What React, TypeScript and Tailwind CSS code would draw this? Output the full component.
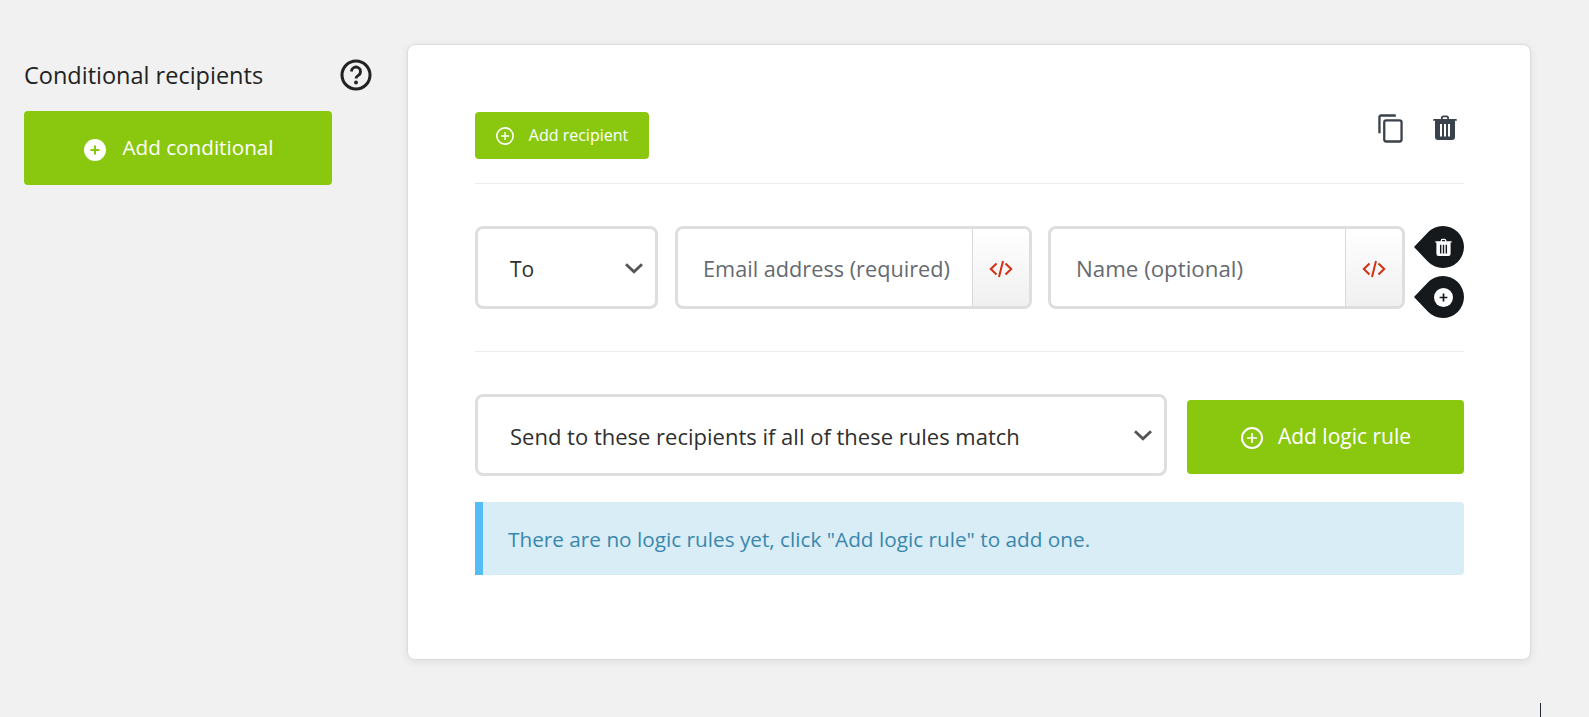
function PlusCircleSolid({ className }: { className: string }) {
  return (
    <svg className={className} viewBox="0 0 22 22">
      <circle cx="11" cy="11" r="11" fill="#ffffff" />
      <path d="M11 6.500v9M6.500 11h9" stroke="currentColor" strokeWidth="2" />
    </svg>
  );
}

function PlusCircleLine({ className }: { className: string }) {
  return (
    <svg className={className} viewBox="0 0 22 22" fill="none" stroke="#ffffff" strokeWidth="2">
      <circle cx="11" cy="11" r="10" />
      <path d="M11 6v10M6 11h10" strokeWidth="1.700" />
    </svg>
  );
}

function Trash({ className }: { className: string }) {
  return (
    <svg className={className} viewBox="0 0 24 26">
      <path
        fill="currentColor"
        fillRule="evenodd"
        d="M8 4V3a2.500 2.500 0 0 1 2.500-2.500h3A2.500 2.500 0 0 1 16 3v1h7a.9.9 0 0 1 0 1.800h-1V22a3 3 0 0 1-3 3H5a3 3 0 0 1-3-3V5.800H1A.9.9 0 0 1 1 4h7Zm1.800 0h4.400V3a.7.7 0 0 0-.7-.7h-3a.7.7 0 0 0-.7.7v1ZM7 9v12.500h2V9H7Zm4 0v12.500h2V9h-2Zm4 0v12.500h2V9h-2Z"
      />
    </svg>
  );
}

function Copy({ className }: { className: string }) {
  return (
    <svg className={className} viewBox="0 0 26 30" fill="none" stroke="currentColor" strokeWidth="2.400">
      <path d="M1.500 20V3a1.500 1.500 0 0 1 1.500-1.500h15.500" />
      <rect x="6.500" y="6.500" width="18" height="22" rx="2" />
    </svg>
  );
}

function Chevron({ className }: { className: string }) {
  return (
    <svg className={className} viewBox="0 0 18 11" fill="none" stroke="#555555" strokeWidth="2.800">
      <path d="M1 1.200 9 8.800l8-7.600" />
    </svg>
  );
}

function CodeIcon() {
  return (
    <svg className="w-[24px] h-[18px] mt-[3px]" viewBox="0 0 24 18" fill="none" stroke="#d32f12" strokeWidth="2">
      <path d="M7.500 3.500 1.800 9l5.700 5.500M16.500 3.500 22.200 9l-5.700 5.500M14 1l-4 16" />
    </svg>
  );
}

function Pin({ children }: { children: React.ReactNode }) {
  return (
    <div className="relative w-[50px] h-[42px] flex items-center justify-end">
      <svg className="absolute inset-0 w-[50px] h-[42px]" viewBox="0 0 50 42">
        <path d="M0 21 L13.800 6.500 A21 21 0 1 1 13.800 35.500 Z" fill="#15191c" />
      </svg>
      <div className="relative w-[42px] h-[42px] flex items-center justify-center text-white">{children}</div>
    </div>
  );
}

function Select({ label, className, textClass }: { label: string; className: string; textClass: string }) {
  return (
    <div className={`flex items-center justify-between bg-white border-[3px] border-[#dedede] rounded-[8px] pl-[32px] text-[#2f2f2f] ${className}`}>
      <span className={textClass}>{label}</span>
      <Chevron className="w-[18px] h-[11px] mr-[12px] mt-[1px]" />
    </div>
  );
}

function TextField({ placeholder, className, textClass }: { placeholder: string; className: string; textClass: string }) {
  return (
    <div className={`flex bg-white border-[3px] border-[#dedede] rounded-[8px] overflow-hidden ${className}`}>
      <div className={`flex-1 flex items-center pl-[25px] text-[#666a70] whitespace-nowrap ${textClass}`}>{placeholder}</div>
      <div className="w-[57px] flex items-center justify-center border-l border-[#d9d9d9] bg-gradient-to-b from-white to-[#f0f0f0]">
        <CodeIcon />
      </div>
    </div>
  );
}

export default function App() {
  return (
    <div className="relative h-[717px] overflow-hidden bg-[#f1f1f1] flex pt-[44px] font-['Open_Sans',sans-serif] text-[#222222]">
      {/* Left column */}
      <div className="w-[407px] shrink-0 pl-[24px] pt-[1px]">
        <div className="flex items-center justify-between w-[348px] h-[56px]">
          <h2 className="text-[23.500px] leading-none mt-[6px]">Conditional recipients</h2>
          <svg className="w-[32px] h-[32px] mt-[3px]" viewBox="0 0 32 32" fill="none">
            <circle cx="16" cy="16" r="14" stroke="#222222" strokeWidth="3" />
            <path d="M11.500 12.500a4.500 4.500 0 1 1 6.800 3.900c-1.500.9-2.300 1.600-2.300 3.100" stroke="#222222" strokeWidth="2.800" />
            <circle cx="16" cy="23.500" r="1.900" fill="#222222" />
          </svg>
        </div>
        <button className="mt-[10px] w-[308px] h-[74px] pl-[2px] bg-[#8ac80f] rounded-[4px] flex items-center justify-center gap-[16px] text-white text-[20.700px]">
          <PlusCircleSolid className="w-[22px] h-[22px] text-[#8ac80f] mt-[3px]" />
          <span className="-mt-[1px]">Add conditional</span>
        </button>
      </div>

      {/* Card */}
      <div className="w-[1124px] h-[616px] bg-white rounded-[8px] border border-[#dcdcdc] shadow-[0_2px_8px_rgba(0,0,0,0.08)] pl-[67px] pr-[66px] pt-[67px]">
        <div className="flex justify-between h-[72px] border-b border-[#ececec]">
          <button className="w-[174px] h-[47px] bg-[#8ac80f] rounded-[4px] flex items-center justify-center gap-[15px] text-white text-[16px]">
            <PlusCircleLine className="w-[18px] h-[18px] mt-[1px]" />
            <span className="-mt-[2px]">Add recipient</span>
          </button>
          <div className="flex gap-[30px] pr-[7px] text-[#3a424b]">
            <Copy className="w-[25px] h-[29px] mt-[2px]" />
            <Trash className="w-[24px] h-[26px] mt-[3px]" />
          </div>
        </div>

        <div className="flex gap-[16px] pt-[42px] pb-[33px] border-b border-[#ececec]">
          <Select label="To" className="w-[183px] h-[83px] mr-[1px]" textClass="pt-[4px] text-[21px]" />
          <TextField placeholder="Email address (required)" className="w-[357px] h-[83px]" textClass="pt-[4px] text-[21.700px]" />
          <TextField placeholder="Name (optional)" className="w-[357px] h-[83px]" textClass="pt-[2px] text-[22.300px]" />
          <div className="flex flex-col gap-[8px] -ml-[7px]">
            <Pin>
              <Trash className="w-[17px] h-[19px]" />
            </Pin>
            <Pin>
              <PlusCircleSolid className="w-[19px] h-[19px] text-[#15191c]" />
            </Pin>
          </div>
        </div>

        <div className="flex items-center justify-between mt-[42px] h-[82px]">
          <Select label="Send to these recipients if all of these rules match" className="w-[692px] h-[82px]" textClass="pt-[2px] text-[22px]" />
          <button className="w-[277px] h-[74px] mt-[3px] bg-[#8ac80f] rounded-[4px] flex items-center justify-center gap-[15px] text-white text-[21px]">
            <PlusCircleLine className="w-[22px] h-[22px] mt-[3px] ml-[1px]" />
            <span>Add logic rule</span>
          </button>
        </div>

        <div className="mt-[26px] h-[73px] flex items-center bg-[#d9edf7] border-l-[8px] border-[#55bdf6] rounded-r-[4px] pl-[25px] pt-[2px] text-[20.750px] text-[#3a87ad]">
          There are no logic rules yet, click "Add logic rule" to add one.
        </div>
      </div>

      {/* Text caret at the bottom of the window */}
      <div className="absolute left-[1540px] top-[703px] w-px h-[14px] bg-[#222a33]" />
    </div>
  );
}
